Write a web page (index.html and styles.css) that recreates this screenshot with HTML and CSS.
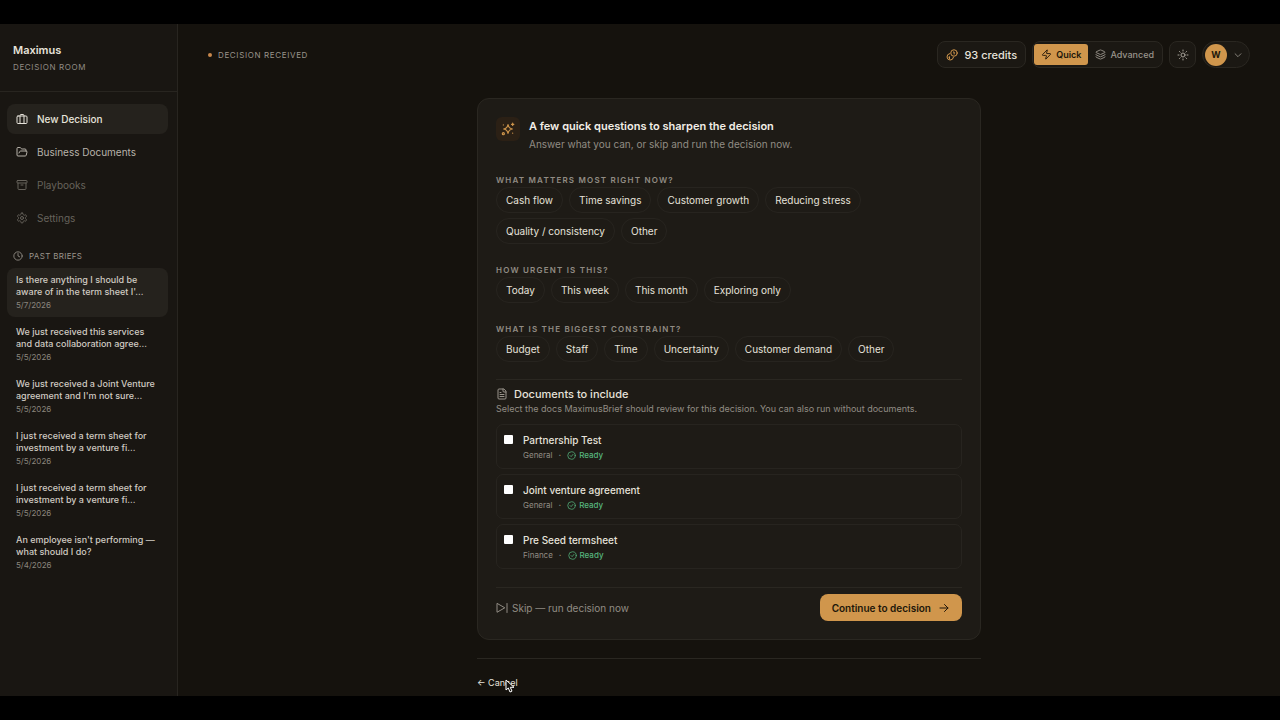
FILE: index.html
```html
<!DOCTYPE html>
<html lang="en">
<head>
<meta charset="utf-8">
<meta name="viewport" content="width=device-width, initial-scale=1">
<title>Maximus Decision Room</title>
<link rel="stylesheet" href="styles.css">
</head>
<body>
<div class="app">
  <aside class="sidebar">
    <div class="brand">
      <div class="brand-name">Maximus</div>
      <div class="brand-sub">DECISION ROOM</div>
    </div>
    <nav class="nav">
      <a class="nav-item active" href="#"><svg class="icon i12" viewBox="0 0 24 24"><rect x="2" y="6" width="20" height="15" rx="2"/><path d="M8 21V5a2 2 0 0 1 2-2h4a2 2 0 0 1 2 2v16"/></svg>New Decision</a>
      <a class="nav-item" href="#"><svg class="icon i12" viewBox="0 0 24 24"><path d="m6 14 1.5-2.9A2 2 0 0 1 9.2 10H20a2 2 0 0 1 1.9 2.5l-1.5 6a2 2 0 0 1-2 1.5H4a2 2 0 0 1-2-2V5a2 2 0 0 1 2-2h3.9a2 2 0 0 1 1.7.9l.8 1.2a2 2 0 0 0 1.7.9H18a2 2 0 0 1 2 2v2"/></svg>Business Documents</a>
      <a class="nav-item dim" href="#"><svg class="icon i12" viewBox="0 0 24 24"><rect x="2" y="3" width="20" height="5" rx="1"/><path d="M4 8v11a2 2 0 0 0 2 2h12a2 2 0 0 0 2-2V8M10 12h4"/></svg>Playbooks</a>
      <a class="nav-item dim" href="#"><svg class="icon i12" viewBox="0 0 24 24"><path d="M12.2 2h-.4a2 2 0 0 0-2 2v.2a2 2 0 0 1-1 1.7l-.4.3a2 2 0 0 1-2 0l-.2-.1a2 2 0 0 0-2.7.7l-.2.4a2 2 0 0 0 .7 2.7l.2.1a2 2 0 0 1 1 1.7v.5a2 2 0 0 1-1 1.8l-.2.1a2 2 0 0 0-.7 2.7l.2.4a2 2 0 0 0 2.7.7l.2-.1a2 2 0 0 1 2 0l.4.3a2 2 0 0 1 1 1.7v.2a2 2 0 0 0 2 2h.4a2 2 0 0 0 2-2v-.2a2 2 0 0 1 1-1.7l.4-.3a2 2 0 0 1 2 0l.2.1a2 2 0 0 0 2.7-.7l.2-.4a2 2 0 0 0-.7-2.7l-.2-.1a2 2 0 0 1-1-1.800v-.5a2 2 0 0 1 1-1.700l.2-.1a2 2 0 0 0 .7-2.700l-.2-.4a2 2 0 0 0-2.700-.7l-.2.1a2 2 0 0 1-2 0l-.4-.3a2 2 0 0 1-1-1.700V4a2 2 0 0 0-2-2z"/><circle cx="12" cy="12" r="3"/></svg>Settings</a>
    </nav>
    <div class="past-head"><svg class="icon i10" viewBox="0 0 24 24"><circle cx="12" cy="12" r="10"/><path d="M12 6v6l4 2"/></svg>PAST BRIEFS</div>
    <div class="briefs">
      <a class="brief active" href="#"><span>Is there anything I should be<br>aware of in the term sheet I'...</span><time>5/7/2026</time></a>
      <a class="brief" href="#"><span>We just received this services<br>and data collaboration agree...</span><time>5/5/2026</time></a>
      <a class="brief" href="#"><span>We just received a Joint Venture<br>agreement and I'm not sure...</span><time>5/5/2026</time></a>
      <a class="brief" href="#"><span>I just received a term sheet for<br>investment by a venture fi...</span><time>5/5/2026</time></a>
      <a class="brief" href="#"><span>I just received a term sheet for<br>investment by a venture fi...</span><time>5/5/2026</time></a>
      <a class="brief" href="#"><span>An employee isn't performing —<br>what should I do?</span><time>5/4/2026</time></a>
    </div>
  </aside>
  <main class="main">
    <header class="topbar">
      <div class="status"><i class="dot"></i>DECISION RECEIVED</div>
      <button class="pill credits" type="button"><svg class="icon i12 gold" viewBox="0 0 24 24"><circle cx="16" cy="8" r="6.5"/><path d="M7.2 9.2a6.500 6.500 0 1 0 7.700 7.600M15 6h1.300v4M5.500 16.200l1.500-1v4"/></svg>93 credits</button>
      <div class="toggle">
        <button class="seg on" type="button"><svg class="icon i11" viewBox="0 0 24 24"><path d="M4 14a1 1 0 0 1-.8-1.600l9.900-10.200a.5.5 0 0 1 .9.500l-1.900 6A1 1 0 0 0 13 10h7a1 1 0 0 1 .8 1.600l-9.900 10.200a.5.5 0 0 1-.9-.5l1.900-6A1 1 0 0 0 11 14z"/></svg>Quick</button>
        <button class="seg" type="button"><svg class="icon i11" viewBox="0 0 24 24"><path d="M12.800 2.200a2 2 0 0 0-1.600 0L2.600 6.100a1 1 0 0 0 0 1.800l8.600 3.900a2 2 0 0 0 1.600 0l8.600-3.900a1 1 0 0 0 0-1.800zM2 12a1 1 0 0 0 .6.900l8.600 3.900a2 2 0 0 0 1.600 0l8.600-3.900A1 1 0 0 0 22 12M2 17a1 1 0 0 0 .6.900l8.600 3.900a2 2 0 0 0 1.600 0l8.600-3.900A1 1 0 0 0 22 17"/></svg>Advanced</button>
      </div>
      <button class="pill theme" type="button" aria-label="Theme"><svg class="icon i12" viewBox="0 0 24 24"><circle cx="12" cy="12" r="4"/><path d="M12 2v2M12 20v2M4.900 4.900l1.400 1.400M17.700 17.700l1.400 1.400M2 12h2M20 12h2M6.300 17.700l-1.400 1.400M19.100 4.900l-1.400 1.400"/></svg></button>
      <button class="pill user" type="button"><span class="avatar">W</span><svg class="icon i10" viewBox="0 0 24 24"><path d="m5 9 7 7 7-7"/></svg></button>
    </header>
    <div class="column">
      <section class="card">
        <div class="card-head">
          <div class="badge"><svg class="icon i14" viewBox="0 0 24 24"><path d="M12 4.500c.8 4.800 2.700 6.700 7.500 7.500-4.800.8-6.700 2.700-7.500 7.500-.8-4.800-2.700-6.700-7.500-7.500 4.800-.8 6.700-2.700 7.500-7.500zM20 2v4M22 4h-4"/><circle cx="4" cy="20" r="1.800"/><path d="M4 5v.1M20 19v.1"/></svg></div>
          <div>
            <h1>A few quick questions to sharpen the decision</h1>
            <p class="lead">Answer what you can, or skip and run the decision now.</p>
          </div>
        </div>
        <div class="question">
          <h2>WHAT MATTERS MOST RIGHT NOW?</h2>
          <div class="chips"><button type="button">Cash flow</button><button type="button">Time savings</button><button type="button">Customer growth</button><button type="button">Reducing stress</button><button type="button">Quality / consistency</button><button type="button">Other</button></div>
        </div>
        <div class="question">
          <h2>HOW URGENT IS THIS?</h2>
          <div class="chips"><button type="button">Today</button><button type="button">This week</button><button type="button">This month</button><button type="button">Exploring only</button></div>
        </div>
        <div class="question">
          <h2>WHAT IS THE BIGGEST CONSTRAINT?</h2>
          <div class="chips"><button type="button">Budget</button><button type="button">Staff</button><button type="button">Time</button><button type="button">Uncertainty</button><button type="button">Customer demand</button><button type="button">Other</button></div>
        </div>
        <div class="docs">
          <h3><svg class="icon i12" viewBox="0 0 24 24"><path d="M15 2H6a2 2 0 0 0-2 2v16a2 2 0 0 0 2 2h12a2 2 0 0 0 2-2V7zM14 2v4a2 2 0 0 0 2 2h4M10 9H8M16 13H8M16 17H8"/></svg>Documents to include</h3>
          <p class="hint">Select the docs MaximusBrief should review for this decision. You can also run without documents.</p>
          <div class="doc-list">
            <label class="doc"><input type="checkbox"><span class="doc-body"><span class="doc-name">Partnership Test</span><span class="meta">General<b>·</b><span class="ready"><svg class="icon i9" viewBox="0 0 24 24"><circle cx="12" cy="12" r="10"/><path d="m8 12 3 3 5-6"/></svg>Ready</span></span></span></label>
            <label class="doc"><input type="checkbox"><span class="doc-body"><span class="doc-name">Joint venture agreement</span><span class="meta">General<b>·</b><span class="ready"><svg class="icon i9" viewBox="0 0 24 24"><circle cx="12" cy="12" r="10"/><path d="m8 12 3 3 5-6"/></svg>Ready</span></span></span></label>
            <label class="doc"><input type="checkbox"><span class="doc-body"><span class="doc-name">Pre Seed termsheet</span><span class="meta">Finance<b>·</b><span class="ready"><svg class="icon i9" viewBox="0 0 24 24"><circle cx="12" cy="12" r="10"/><path d="m8 12 3 3 5-6"/></svg>Ready</span></span></span></label>
          </div>
        </div>
        <div class="actions">
          <button class="skip" type="button"><svg class="icon i12" viewBox="0 0 24 24"><path d="M2 3.500v17L17 12zM22 3v18"/></svg>Skip — run decision now</button>
          <button class="continue" type="button">Continue to decision<svg class="icon i12" viewBox="0 0 24 24"><path d="M4 12h16M13 5l7 7-7 7"/></svg></button>
        </div>
      </section>
      <footer class="foot"><a class="cancel" href="#">← Cancel<svg class="cursor" viewBox="0 0 10 14"><path d="M1 1v10l2.300-2 1.700 4 2-.9-1.700-3.800H9z"/></svg></a></footer>
    </div>
  </main>
</div>
</body>
</html>
```

FILE: styles.css
```css
* { box-sizing: border-box; }
body {
  margin: 0;
  padding: 24px 0;
  height: 100vh;
  display: flex;
  background: #000;
  color: #e6e2da;
  font-family: Inter, "Liberation Sans", sans-serif;
  font-size: 10px;
  line-height: 14px;
}
button { font: inherit; color: inherit; background: none; border: 0; padding: 0; margin: 0; }
a { color: inherit; text-decoration: none; }
h1, h2, h3, p { margin: 0; }
.app { flex: 1; display: flex; min-width: 0; background: #15120d; overflow: hidden; }
.icon { flex: none; fill: none; stroke: currentColor; stroke-width: 2; stroke-linecap: round; stroke-linejoin: round; }
.i9 { width: 9px; height: 9px; }
.i10 { width: 10px; height: 10px; }
.i11 { width: 11px; height: 11px; }
.i12 { width: 12px; height: 12px; }
.i14 { width: 14px; height: 14px; }
.gold { color: #d0964c; }

.sidebar { flex: none; width: 178px; background: #191612; border-right: 1px solid #282520; }
.brand { height: 68px; padding: 18px 13px 0; border-bottom: 1px solid #282520; }
.brand-name { font-size: 11px; line-height: 16px; font-weight: 600; }
.brand-sub { margin-top: 2px; font-size: 8px; letter-spacing: 0.08em; color: #918c84; }
.nav { display: grid; gap: 3px; padding: 12px 9px 0 7px; }
.nav-item { display: flex; align-items: center; gap: 9px; height: 30px; padding: 0 9px; border-radius: 8px; color: #b8b3aa; }
.nav-item.active { background: #25221d; color: #e6e2da; font-weight: 500; }
.nav-item.dim { color: #66625b; }
.past-head { display: flex; align-items: center; gap: 6px; margin: 16px 0 5px 13px; font-size: 8px; letter-spacing: 0.04em; color: #99948b; }
.briefs { display: grid; gap: 3px; padding: 0 9px 0 7px; }
.brief { display: block; height: 49px; padding: 6px 0 0 9px; border-radius: 8px; font-size: 9px; line-height: 12px; font-weight: 500; color: #d0cbc2; white-space: nowrap; }
.brief.active { background: #25221d; }
.brief time { display: block; margin-top: 1px; font-size: 8px; font-weight: 400; color: #8a857d; }

.main { flex: 1; min-width: 0; }
.topbar { display: flex; align-items: center; gap: 6px; padding: 17px 30px 0; }
.status { flex: 1; display: flex; align-items: center; gap: 6px; font-size: 8px; letter-spacing: 0.08em; color: #99948b; }
.dot { width: 4px; height: 4px; border-radius: 50%; background: #c8884c; }
.pill, .toggle { display: flex; align-items: center; justify-content: center; height: 27px; border: 1px solid #2a2721; border-radius: 8px; background: #1b1813; }
.credits { gap: 6px; padding: 0 8px; font-size: 11px; font-weight: 500; }
.toggle { padding: 0 1px; overflow: hidden; }
.seg { display: flex; align-items: center; gap: 4px; height: 21px; padding: 0 7px; border-radius: 3px; font-size: 9px; font-weight: 500; color: #99948b; }
.seg.on { background: #d0964c; color: #21160a; font-weight: 600; }
.theme { width: 27px; color: #a7a299; }
.user { gap: 6px; padding: 0 6px 0 2px; border-radius: 14px; color: #99948b; }
.avatar { width: 22px; height: 22px; border-radius: 50%; background: #d0964c; color: #21160a; font-size: 9px; line-height: 22px; font-weight: 700; text-align: center; }

.column { max-width: 504px; margin: 30px auto 0; }
.card { padding: 18px; border: 1px solid #2a2721; border-radius: 12px; background: #1e1b16; }
.card-head { display: flex; gap: 9px; }
.badge { display: grid; place-items: center; flex: none; width: 24px; height: 24px; border-radius: 6px; background: #2b2015; color: #d0964c; }
h1 { font-size: 11px; line-height: 18px; font-weight: 600; color: #f2eee6; }
.lead { line-height: 18px; color: #918c84; }
.question { margin-top: 20px; }
.card-head + .question { margin-top: 21px; }
h2 { font-size: 8px; line-height: 13px; font-weight: 600; letter-spacing: 0.15em; color: #918c84; }
.chips { display: flex; flex-wrap: wrap; gap: 5px 6px; }
.chips button { height: 26px; padding: 0 9px; border: 1px solid #27241f; border-radius: 13px; }
.docs { margin-top: 17px; padding-top: 6px; border-top: 1px solid #2a2721; }
h3 { display: flex; align-items: center; gap: 6px; font-size: 11px; line-height: 16px; font-weight: 500; }
h3 .icon { color: #99948b; }
.hint { font-size: 9px; color: #918c84; }
.doc-list { display: grid; gap: 5px; margin-top: 8px; }
.doc { display: flex; gap: 10px; height: 45px; padding: 7px; border: 1px solid #27241f; border-radius: 7px; }
.doc input { appearance: none; width: 9px; height: 9px; margin: 3px 0 0; border-radius: 1px; background: #fff; }
.doc-body { display: grid; align-content: start; }
.doc-name { line-height: 16px; font-weight: 500; }
.meta { display: flex; font-size: 8px; color: #918c84; }
.meta b { margin: 0 6px; }
.ready { display: flex; align-items: center; gap: 3px; color: #56b57d; font-weight: 500; }
.actions { display: flex; align-items: center; justify-content: space-between; margin-top: 18px; padding-top: 6px; border-top: 1px solid #2a2721; }
.skip { display: flex; align-items: center; gap: 4px; color: #918c84; }
.continue { display: flex; align-items: center; gap: 7px; height: 27px; padding: 0 12px; border-radius: 8px; background: #d0964c; color: #21160a; font-weight: 600; }
.foot { margin-top: 18px; padding-top: 17px; border-top: 1px solid #2a2721; font-size: 9px; }
.cancel { position: relative; }
.cursor { position: absolute; left: 28px; top: 2px; width: 10px; height: 14px; fill: #15120d; stroke: #fff; stroke-width: 1; }
```
